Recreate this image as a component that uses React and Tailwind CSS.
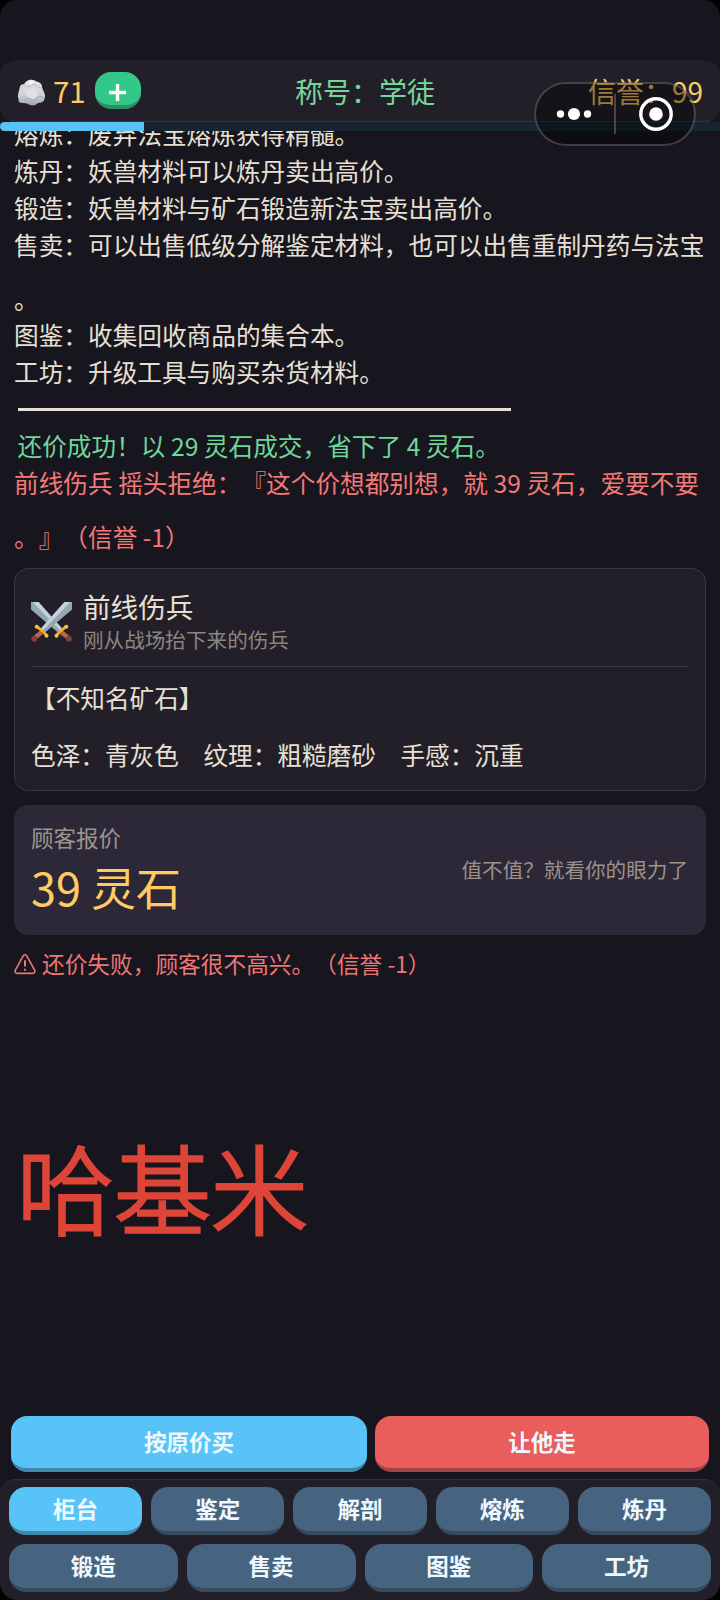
import React, { useState } from 'react';
import clsx from 'clsx';

const guideLines = [
    '熔炼：废弃法宝熔炼获得精髓。',
    '炼丹：妖兽材料可以炼丹卖出高价。',
    '锻造：妖兽材料与矿石锻造新法宝卖出高价。',
    '售卖：可以出售低级分解鉴定材料，也可以出售重制丹药与法宝。',
    '图鉴：收集回收商品的集合本。',
    '工坊：升级工具与购买杂货材料。',
];

const topTabs = ['柜台', '鉴定', '解剖', '熔炼', '炼丹'];
const bottomTabs = ['锻造', '售卖', '图鉴', '工坊'];

const StoneIcon = () => (
    <svg width="29" height="28" viewBox="0 0 29 28" className="mt-1 shrink-0">
        <defs>
            <linearGradient id="stone" x1="0" y1="0" x2="0" y2="1">
                <stop offset="0" stopColor="#e6e8ea" />
                <stop offset=".6" stopColor="#cdd2d8" />
                <stop offset="1" stopColor="#9aa3af" />
            </linearGradient>
        </defs>
        <path d="M1 15.500Q2.500 10 3 7.500 3.500 5 7 5.200 9 1.500 13 .8 17 .2 19.500 2.500 24 3 25 7 25 9 26 11 29 16 27.500 20 26.500 24 21 24 18 27.500 13 26 9 23.500 5 24 1 24 1.500 20 .5 18 1 15.500Z" fill="url(#stone)" />
        <path d="M3.500 9 8 6.500l4 1.500 5-3 4 3 4 1" fill="none" stroke="#bcc3ca" strokeWidth="1.200" />
        <path d="m8 13 5-3 6 2 3 5-5 4-6-2Z" fill="#dfe2e5" />
        <path d="m11 19 6 2 5-4 5 2M11 19l-3 3" fill="none" stroke="#a9b1bb" strokeWidth="1.300" />
        <path d="M11 3.500 14.500 2l3 1.500-3 2Z" fill="#f7f7f7" />
    </svg>
);

const Sword = () => (
    <>
        <path d="M0 0H7.500L31 26.500 27 30.500 0 7.500Z" fill="#94a8b3" />
        <path d="M1.500 0H7.500L31 26.500 29.200 28.500Z" fill="#c4d2d9" />
        <path d="m30.500 30.500 6 4.500" stroke="#b9664f" strokeWidth="4.500" />
        <circle cx="37.800" cy="36.800" r="3" fill="#7d4338" />
        <path d="M25.500 33 35 24.500" stroke="#f5a92f" strokeWidth="3" strokeLinecap="round" />
        <circle cx="25.500" cy="33.700" r="2" fill="#fbbd48" />
        <circle cx="35.300" cy="24.700" r="2" fill="#fbbd48" />
    </>
);

const SwordsIcon = () => (
    <svg width="41" height="41" viewBox="0 0 41 41" className="mt-[3px] shrink-0">
        <Sword />
        <g transform="translate(41 0) scale(-1 1)"><Sword /></g>
    </svg>
);

const WarningIcon = () => (
    <svg width="22" height="21" viewBox="0 0 21 20" fill="none" stroke="#ed7775" strokeWidth="1.500" className="shrink-0">
        <path d="M8.800 1.800c.8-1.400 2.600-1.400 3.400 0l7.500 13.600c.8 1.500-.2 3.100-1.800 3.100H3.100c-1.600 0-2.600-1.600-1.800-3.100Z" strokeLinejoin="round" />
        <path d="M10.500 6v6M10.500 14v2" strokeWidth="1.900" />
    </svg>
);

// Floating mini-program menu in the top right corner
const Capsule = () => (
    <div className="absolute left-[534px] top-[82px] z-20 h-16 w-[162px] rounded-full border-2 border-white/20 bg-black/40">
        <svg width="158" height="60" viewBox="0 0 158 60" fill="#fff">
            <circle cx="24.500" cy="30" r="3.700" />
            <circle cx="38" cy="30" r="6.100" />
            <circle cx="51.500" cy="30" r="3.700" />
            <path d="M79 10v40" stroke="#fff" strokeOpacity=".22" strokeWidth="2" />
            <circle cx="120" cy="30" r="15.200" fill="none" stroke="#fff" strokeWidth="3.400" />
            <circle cx="120" cy="30" r="6.800" />
        </svg>
    </div>
);

// Line boxes are taller than the row, so wrapped text keeps its wide spacing
const LogLine = ({ className, children }) => (
    <p className={clsx('-my-[8.65px] [line-break:anywhere] leading-[54.1px]', className)}>{children}</p>
);

const TabButton = ({ label, active, onClick }) => (
    <button
        onClick={onClick}
        className={clsx(
            'h-12 flex-1 rounded-[17px] border-b-4 pb-[2px] text-[22.5px] font-bold leading-none text-[#f0f8ff]',
            active ? 'border-[#4288ae] bg-[#58c3f7]' : 'border-[#364b5e] bg-[#46647f]'
        )}
    >
        {label}
    </button>
);

export default function App() {
    const [activeTab, setActiveTab] = useState('柜台');

    return (
        <div className="h-[1600px] w-[720px] bg-black font-['Noto_Sans_CJK_SC',sans-serif] [text-spacing-trim:space-all]">
            <div className="relative flex h-full flex-col overflow-hidden rounded-[17px] bg-[#17151d] pt-[60px] text-[#e8e0d4]">
                <Capsule />

                {/* Status bar */}
                <header className="z-10 flex h-[62px] shrink-0 items-center rounded-2xl border-b border-[#36333d] bg-[#231f29] px-[17px] text-[28px] leading-none">
                    <div className="flex w-[278px] items-center">
                        <StoneIcon />
                        <span className="ml-[7px] text-[29.500px] text-[#ffcb63]">71</span>
                        <button className="ml-[9px] flex h-[37px] w-[46px] items-center justify-center rounded-2xl border-b-4 border-[#2a9164] bg-[#33c88a]">
                            <svg width="17" height="17" viewBox="0 0 17 17" stroke="#fff" strokeWidth="3.400" className="mt-[7px]">
                                <path d="M8.500 0v17M0 8.500h17" />
                            </svg>
                        </button>
                    </div>
                    <span className="text-[#73d69b]">称号：学徒</span>
                    <span className="flex-1 text-right text-[#ffcb63]">信誉：99</span>
                </header>
                <div className="h-[9px] shrink-0 bg-[#172530]">
                    <div className="h-full w-[144px] rounded-l-full bg-[#58c1f5]" />
                </div>

                {/* Message log */}
                <main className="flex min-h-0 flex-1 flex-col overflow-hidden px-[14px]">
                    <div className="-mt-[16.3px] flex h-[440px] shrink-0 flex-col text-[24.66px]">
                        {guideLines.map(line => (
                            <LogLine key={line}>{line}</LogLine>
                        ))}
                        <div className="flex h-[36.8px] shrink-0 items-center pl-1 pt-[2px]">
                            <div className="h-[3px] w-[493px] bg-[#e8e0d4]" />
                        </div>
                        <LogLine className="pl-[3.500px] text-[#6fd79a]">还价成功！以 29 灵石成交，省下了 4 灵石。</LogLine>
                        <LogLine className="text-[#f37978]">前线伤兵 摇头拒绝：『这个价想都别想，就 39 灵石，爱要不要。』（信誉 -1）</LogLine>
                    </div>

                    {/* Customer */}
                    <section className="mt-[13.3px] h-[223px] shrink-0 rounded-[14px] border border-[#393643] bg-[#231f29] px-4 pt-5">
                        <div className="flex h-[78px] items-center border-b border-[#3a3b4e] pb-[14px]">
                            <SwordsIcon />
                            <div className="ml-[11px]">
                                <h2 className="text-[27.6px] leading-[36px]">前线伤兵</h2>
                                <p className="text-[20.6px] leading-[30px] text-[#8d867f]">刚从战场抬下来的伤兵</p>
                            </div>
                        </div>
                        <div className="pt-[2px] text-[24.64px] leading-[57px]">
                            <p>【不知名矿石】</p>
                            <p>色泽：青灰色　纹理：粗糙磨砂　手感：沉重</p>
                        </div>
                    </section>

                    {/* Price offer */}
                    <section className="mt-[14px] flex h-[130px] shrink-0 items-center justify-between rounded-[14px] bg-[#2d2837] px-[17px]">
                        <div>
                            <p className="text-[22.5px] leading-[34px] text-[#9c948d]">顾客报价</p>
                            <p className="text-[45px] leading-[66px] text-[#ffcb63]">39 灵石</p>
                        </div>
                        <p className="pb-[2px] pr-px text-[20.6px] text-[#9c9289]">值不值？就看你的眼力了</p>
                    </section>

                    <div className="mt-3 flex items-center gap-[6px] text-[22.7px] leading-[34px] text-[#ed7775]">
                        <WarningIcon />
                        <span>还价失败，顾客很不高兴。（信誉 -1）</span>
                    </div>

                    <p className="mt-[132px] pl-[3px] text-[97px] font-light leading-[144px] text-[#dc4538] [stroke-linejoin:round] [-webkit-text-stroke:3px_#dc4538]">
                        哈基米
                    </p>
                </main>

                {/* Deal actions */}
                <div className="mb-[7px] flex h-14 shrink-0 gap-2 pl-[11px] pr-[11px] text-[22.5px] font-bold leading-none text-[#f0f8ff]">
                    <button className="w-[356px] rounded-2xl border-b-4 border-[#4288ae] bg-[#58c3f7] pb-[2px]">按原价买</button>
                    <button className="flex-1 rounded-2xl border-b-4 border-[#a14245] bg-[#e95d5c] pb-[2px]">让他走</button>
                </div>

                <nav className="flex h-[121px] shrink-0 flex-col gap-[9px] rounded-2xl border-t border-[#36333d] bg-[#231f29] px-[9px] pt-[7px]">
                    {[topTabs, bottomTabs].map((row, i) => (
                        <div key={i} className="flex gap-[9px]">
                            {row.map(tab => (
                                <TabButton key={tab} label={tab} active={tab === activeTab} onClick={() => setActiveTab(tab)} />
                            ))}
                        </div>
                    ))}
                </nav>
            </div>
        </div>
    );
}
